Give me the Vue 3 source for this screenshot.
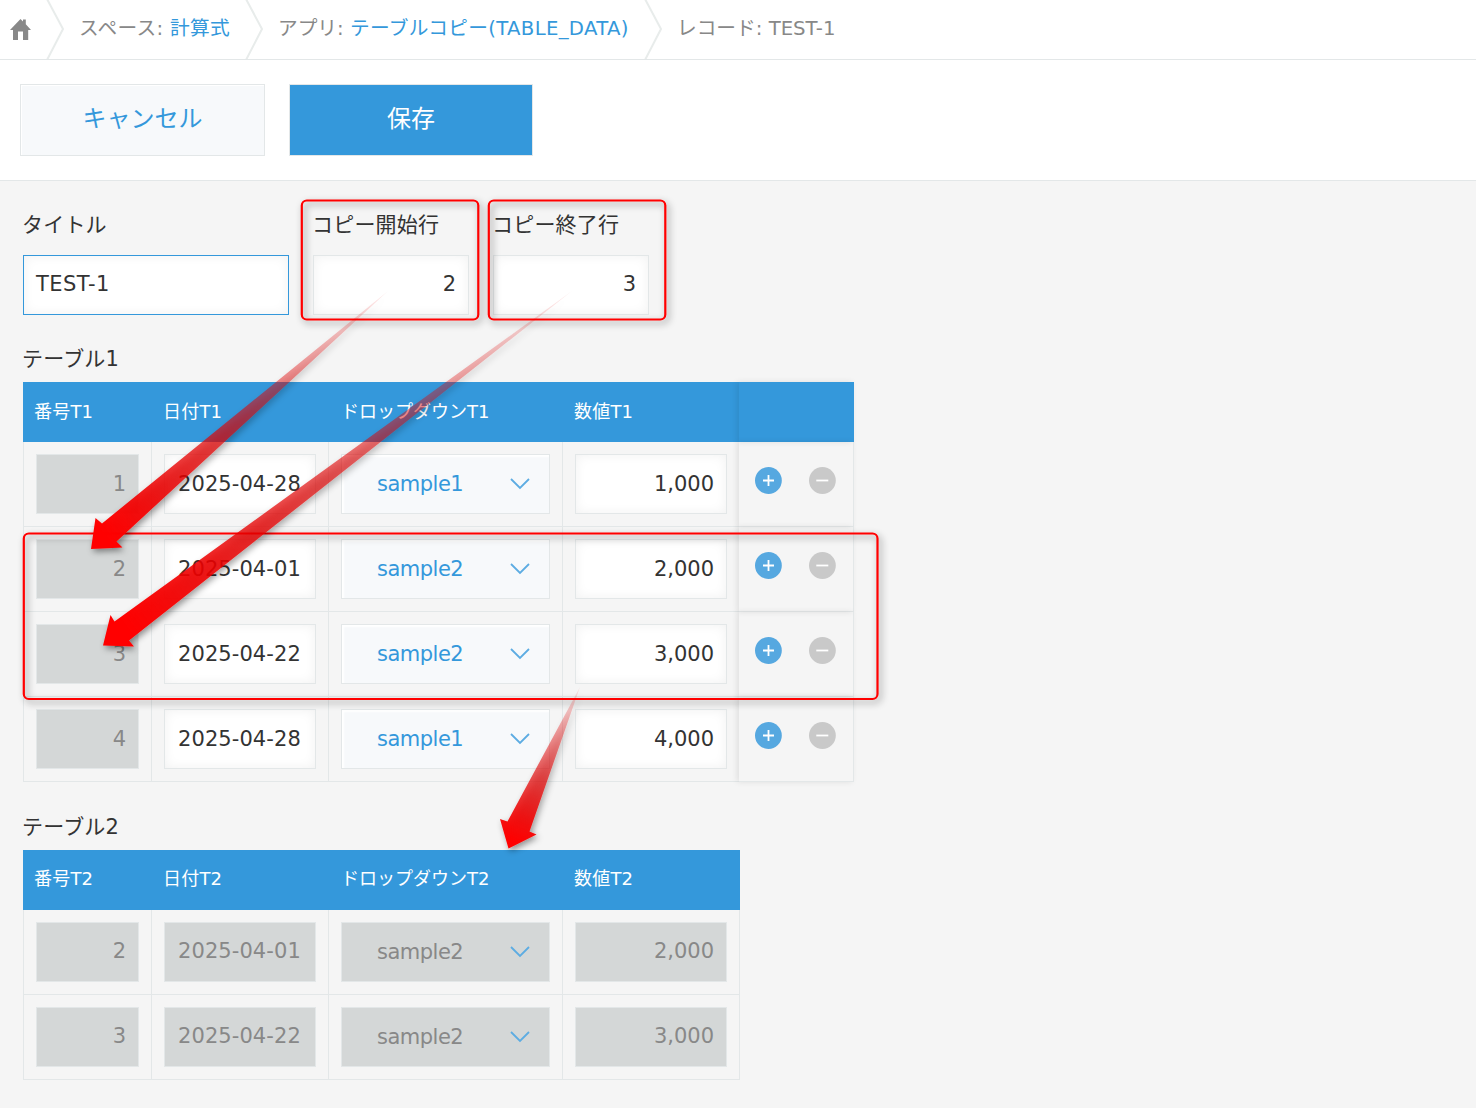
<script setup>
const topFields = [
  { label: 'タイトル', value: 'TEST-1', kind: 'focus' },
  { label: 'コピー開始行', value: '2', kind: 'num' },
  { label: 'コピー終了行', value: '3', kind: 'num' }
]

const tables = [
  {
    title: 'テーブル1',
    suffix: 'T1',
    editable: true,
    rows: [
      ['1', '2025-04-28', 'sample1', '1,000'],
      ['2', '2025-04-01', 'sample2', '2,000'],
      ['3', '2025-04-22', 'sample2', '3,000'],
      ['4', '2025-04-28', 'sample1', '4,000']
    ]
  },
  {
    title: 'テーブル2',
    suffix: 'T2',
    editable: false,
    rows: [
      ['2', '2025-04-01', 'sample2', '2,000'],
      ['3', '2025-04-22', 'sample2', '3,000']
    ]
  }
]

const columns = ['番号', '日付', 'ドロップダウン', '数値']

const frames = [
  { x: 301.8, y: 200.5, w: 176.5, h: 119 },
  { x: 488.8, y: 200.5, w: 176.5, h: 119 },
  { x: 23.8, y: 533.5, w: 853.7, h: 165.5 }
]

const arrows = [
  { points: '388,291 102,523.5 95.5,518 91,549 122.5,547.5 116.5,541.5', from: [388, 291], to: [91, 549] },
  { points: '572,291 114.5,621.5 110.5,615 103,645.5 134,646.5 129,640.5', from: [572, 291], to: [103, 645.5] },
  { points: '580,687 507.5,821.5 500,819 508.5,848.5 536.5,834.5 529.5,831.5', from: [580, 687], to: [508.5, 848.5] }
]
</script>

<template>
  <div class="page">
    <nav class="crumbs">
      <svg class="home" width="22" height="22" viewBox="0 0 22 22">
        <path d="M10.5 0 L13 2.4 V0.6 H15.8 V5.2 L21 11 H18.2 V21 H13 V12.5 H8 V21 H3 V11 H0 Z" fill="#888" />
      </svg>
      <svg class="sep sep-home" width="20" height="59" viewBox="0 0 20 59"><path d="M1 -1 L17 29 L1 60" /></svg>
      <span class="crumb space">スペース: <a>計算式</a></span>
      <svg class="sep" width="20" height="59" viewBox="0 0 20 59"><path d="M1 -1 L17 29 L1 60" /></svg>
      <span class="crumb app">アプリ: <a>テーブルコピー(TABLE_DATA)</a></span>
      <svg class="sep" width="20" height="59" viewBox="0 0 20 59"><path d="M1 -1 L17 29 L1 60" /></svg>
      <span class="crumb">レコード: TEST-1</span>
    </nav>

    <div class="toolbar">
      <button class="btn cancel">キャンセル</button>
      <button class="btn save">保存</button>
    </div>

    <main class="record">
      <div class="fields">
        <div v-for="f in topFields" :key="f.label" class="field">
          <div class="label">{{ f.label }}</div>
          <div class="box" :class="f.kind">{{ f.value }}</div>
        </div>
      </div>

      <section v-for="t in tables" :key="t.title" class="subtable" :class="{ locked: !t.editable }">
        <div class="label">{{ t.title }}</div>
        <div class="row head">
          <div v-for="(c, i) in columns" :key="c" class="cell" :class="'c' + i">{{ c }}{{ t.suffix }}</div>
          <div v-if="t.editable" class="actions"></div>
        </div>
        <div v-for="(r, n) in t.rows" :key="n" class="row body">
          <div class="cell c0"><div class="box num off">{{ r[0] }}</div></div>
          <div class="cell c1"><div class="box date" :class="{ off: !t.editable }">{{ r[1] }}</div></div>
          <div class="cell c2">
            <div class="box select" :class="{ off: !t.editable }">
              <span>{{ r[2] }}</span>
              <svg width="20" height="12" viewBox="0 0 20 12"><path d="M1 1 L10 10 L19 1" /></svg>
            </div>
          </div>
          <div class="cell c3"><div class="box num" :class="{ off: !t.editable }">{{ r[3] }}</div></div>
          <div v-if="t.editable" class="actions">
            <svg width="28" height="28" viewBox="0 0 28 28">
              <circle cx="14.4" cy="14.5" r="13.4" fill="#56a8e0" />
              <path d="M9 14.5 H20 M14.5 9 V20" />
            </svg>
            <svg width="28" height="28" viewBox="0 0 28 28">
              <circle cx="14.4" cy="14.5" r="13.4" fill="#c9c9c9" />
              <path d="M8.3 14.5 H20.3" />
            </svg>
          </div>
        </div>
      </section>
    </main>

    <svg class="notes" width="1476" height="1108" viewBox="0 0 1476 1108">
      <defs>
        <filter id="frame-shadow" filterUnits="userSpaceOnUse" x="0" y="180" width="920" height="560">
          <feDropShadow dx="2.5" dy="3" stdDeviation="3.5" flood-color="#000" flood-opacity="0.48" />
        </filter>
        <filter id="arrow-shadow" filterUnits="userSpaceOnUse" x="60" y="260" width="560" height="620">
          <feDropShadow dx="2" dy="3" stdDeviation="3" flood-color="#000" flood-opacity="0.42" />
        </filter>
        <linearGradient
          v-for="(a, i) in arrows" :id="'fade' + i" :key="i" gradientUnits="userSpaceOnUse"
          :x1="a.from[0]" :y1="a.from[1]" :x2="a.to[0]" :y2="a.to[1]"
        >
          <stop offset="0" stop-color="#e00000" stop-opacity="0.07" />
          <stop offset="0.25" stop-color="#e00000" stop-opacity="0.33" />
          <stop offset="0.55" stop-color="#e00000" stop-opacity="0.64" />
          <stop offset="0.8" stop-color="#f00000" stop-opacity="0.88" />
          <stop offset="0.95" stop-color="#f00" stop-opacity="1" />
        </linearGradient>
      </defs>
      <g filter="url(#frame-shadow)">
        <rect v-for="(f, i) in frames" :key="i" :x="f.x" :y="f.y" :width="f.w" :height="f.h" rx="5" fill="none" stroke="#f00" stroke-width="2.2" />
      </g>
      <polygon v-for="(a, i) in arrows" :key="i" :points="a.points" :fill="`url(#fade${i})`" filter="url(#arrow-shadow)" />
    </svg>
  </div>
</template>

<style>
body {
  margin: 0;
  background: #f5f5f5;
}
</style>

<style scoped>
.page {
  position: relative;
  width: 1476px;
  height: 1108px;
  overflow: hidden;
  background: #f5f5f5;
  color: #333;
  font-family: "DejaVu Sans", "Noto Sans CJK JP", sans-serif;
  font-size: 21px;
  font-weight: 400;
}
.page * {
  box-sizing: border-box;
}
.crumbs {
  display: flex;
  height: 60px;
  background: #fff;
  border-bottom: 1px solid #e3e7e8;
  color: #888;
  font-size: 19.7px;
  line-height: 57px;
  white-space: nowrap;
}
.home {
  margin: 19px 0 0 10px;
}
.sep {
  flex: none;
  fill: none;
  stroke: #e8eceb;
  stroke-width: 2;
}
.sep-home {
  margin-left: 14px;
}
.crumb {
  padding-left: 13px;
}
.space {
  width: 179px;
  letter-spacing: 0.3px;
}
.app {
  width: 379px;
}
.crumb a {
  color: #3498db;
}
.app a {
  letter-spacing: 0.3px;
}
.toolbar {
  display: flex;
  gap: 24px;
  height: 121px;
  padding: 24px 20px;
  background: #fff;
  border-bottom: 1px solid #e3e7e8;
}
.btn {
  height: 72px;
  padding: 0 0 7px;
  border: 1px solid #e3e7e8;
  font: inherit;
  font-size: 24px;
}
.cancel {
  width: 245px;
  background: #f7f9fb;
  box-shadow: 1px 1px 1px #fff inset;
  color: #3498db;
}
.save {
  width: 244px;
  background: #3498db;
  color: #fff;
}
.record {
  padding: 24px 23px;
}
.fields {
  display: flex;
  gap: 24px;
  margin-bottom: 24px;
}
.field {
  width: 156px;
}
.field:first-child {
  width: 266px;
}
.label {
  height: 50px;
  margin-left: -1px;
  line-height: 41px;
  letter-spacing: 0.2px;
  white-space: nowrap;
}
.box {
  height: 60px;
  padding: 0 12px;
  border: 1px solid #e3e7e8;
  background: #fff;
  box-shadow: 0 0 12px #f1f1f1 inset;
  line-height: 58px;
  white-space: nowrap;
}
.fields .box {
  line-height: 57px;
}
.focus {
  border-color: #3498db;
  letter-spacing: 0.4px;
}
.num {
  text-align: right;
}
.date {
  padding-left: 13px;
  letter-spacing: 0.08px;
}
.select {
  display: flex;
  justify-content: space-between;
  padding: 0 19px 0 35px;
  background: #f7f9fb;
  box-shadow: 2px 2px 2px #fff inset;
  color: #3498db;
  letter-spacing: -0.5px;
}
.select svg {
  margin-top: 23px;
  fill: none;
  stroke: #5dace2;
  stroke-width: 1.8;
}
.off {
  background: #d4d7d7;
  box-shadow: none;
  color: #888;
}
.subtable {
  margin-bottom: 25px;
}
.subtable .label {
  height: 43px;
}
.row {
  display: flex;
  width: max-content;
}
.head {
  height: 60px;
  background: #3498db;
  color: #fff;
  font-size: 18px;
  line-height: 60px;
}
.body {
  height: 85px;
}
.cell {
  padding: 12px;
  border-left: 1px solid #e3e7e8;
  border-bottom: 1px solid #e3e7e8;
}
.head .cell {
  padding: 0 12px;
  border: 0;
  letter-spacing: 0.2px;
  white-space: nowrap;
}
.c0 {
  width: 128px;
}
.c1 {
  width: 177px;
}
.c2 {
  width: 234px;
}
.c3 {
  width: 177px;
}
.head .c2 {
  padding-left: 13px;
  letter-spacing: 0;
}
.head .c0 {
  padding-left: 11px;
}
.actions {
  display: flex;
  gap: 26px;
  width: 115px;
  padding: 24px 0 0 15px;
  border-right: 1px solid #e3e7e8;
  border-bottom: 1px solid #e3e7e8;
  box-shadow: -2px 0 6px rgba(0, 0, 0, 0.09);
}
.head .actions {
  border: 0;
}
.actions path {
  stroke: #fff;
  stroke-width: 1.8;
}
.locked .row {
  width: 717px;
}
.locked .body {
  border-right: 1px solid #e3e7e8;
}
.locked .label {
  line-height: 40px;
}
.locked .head {
  line-height: 58px;
}
.locked .box {
  line-height: 57px;
}
.locked .select {
  line-height: 58px;
}
.notes {
  position: absolute;
  top: 0;
  left: 0;
  pointer-events: none;
}
</style>
